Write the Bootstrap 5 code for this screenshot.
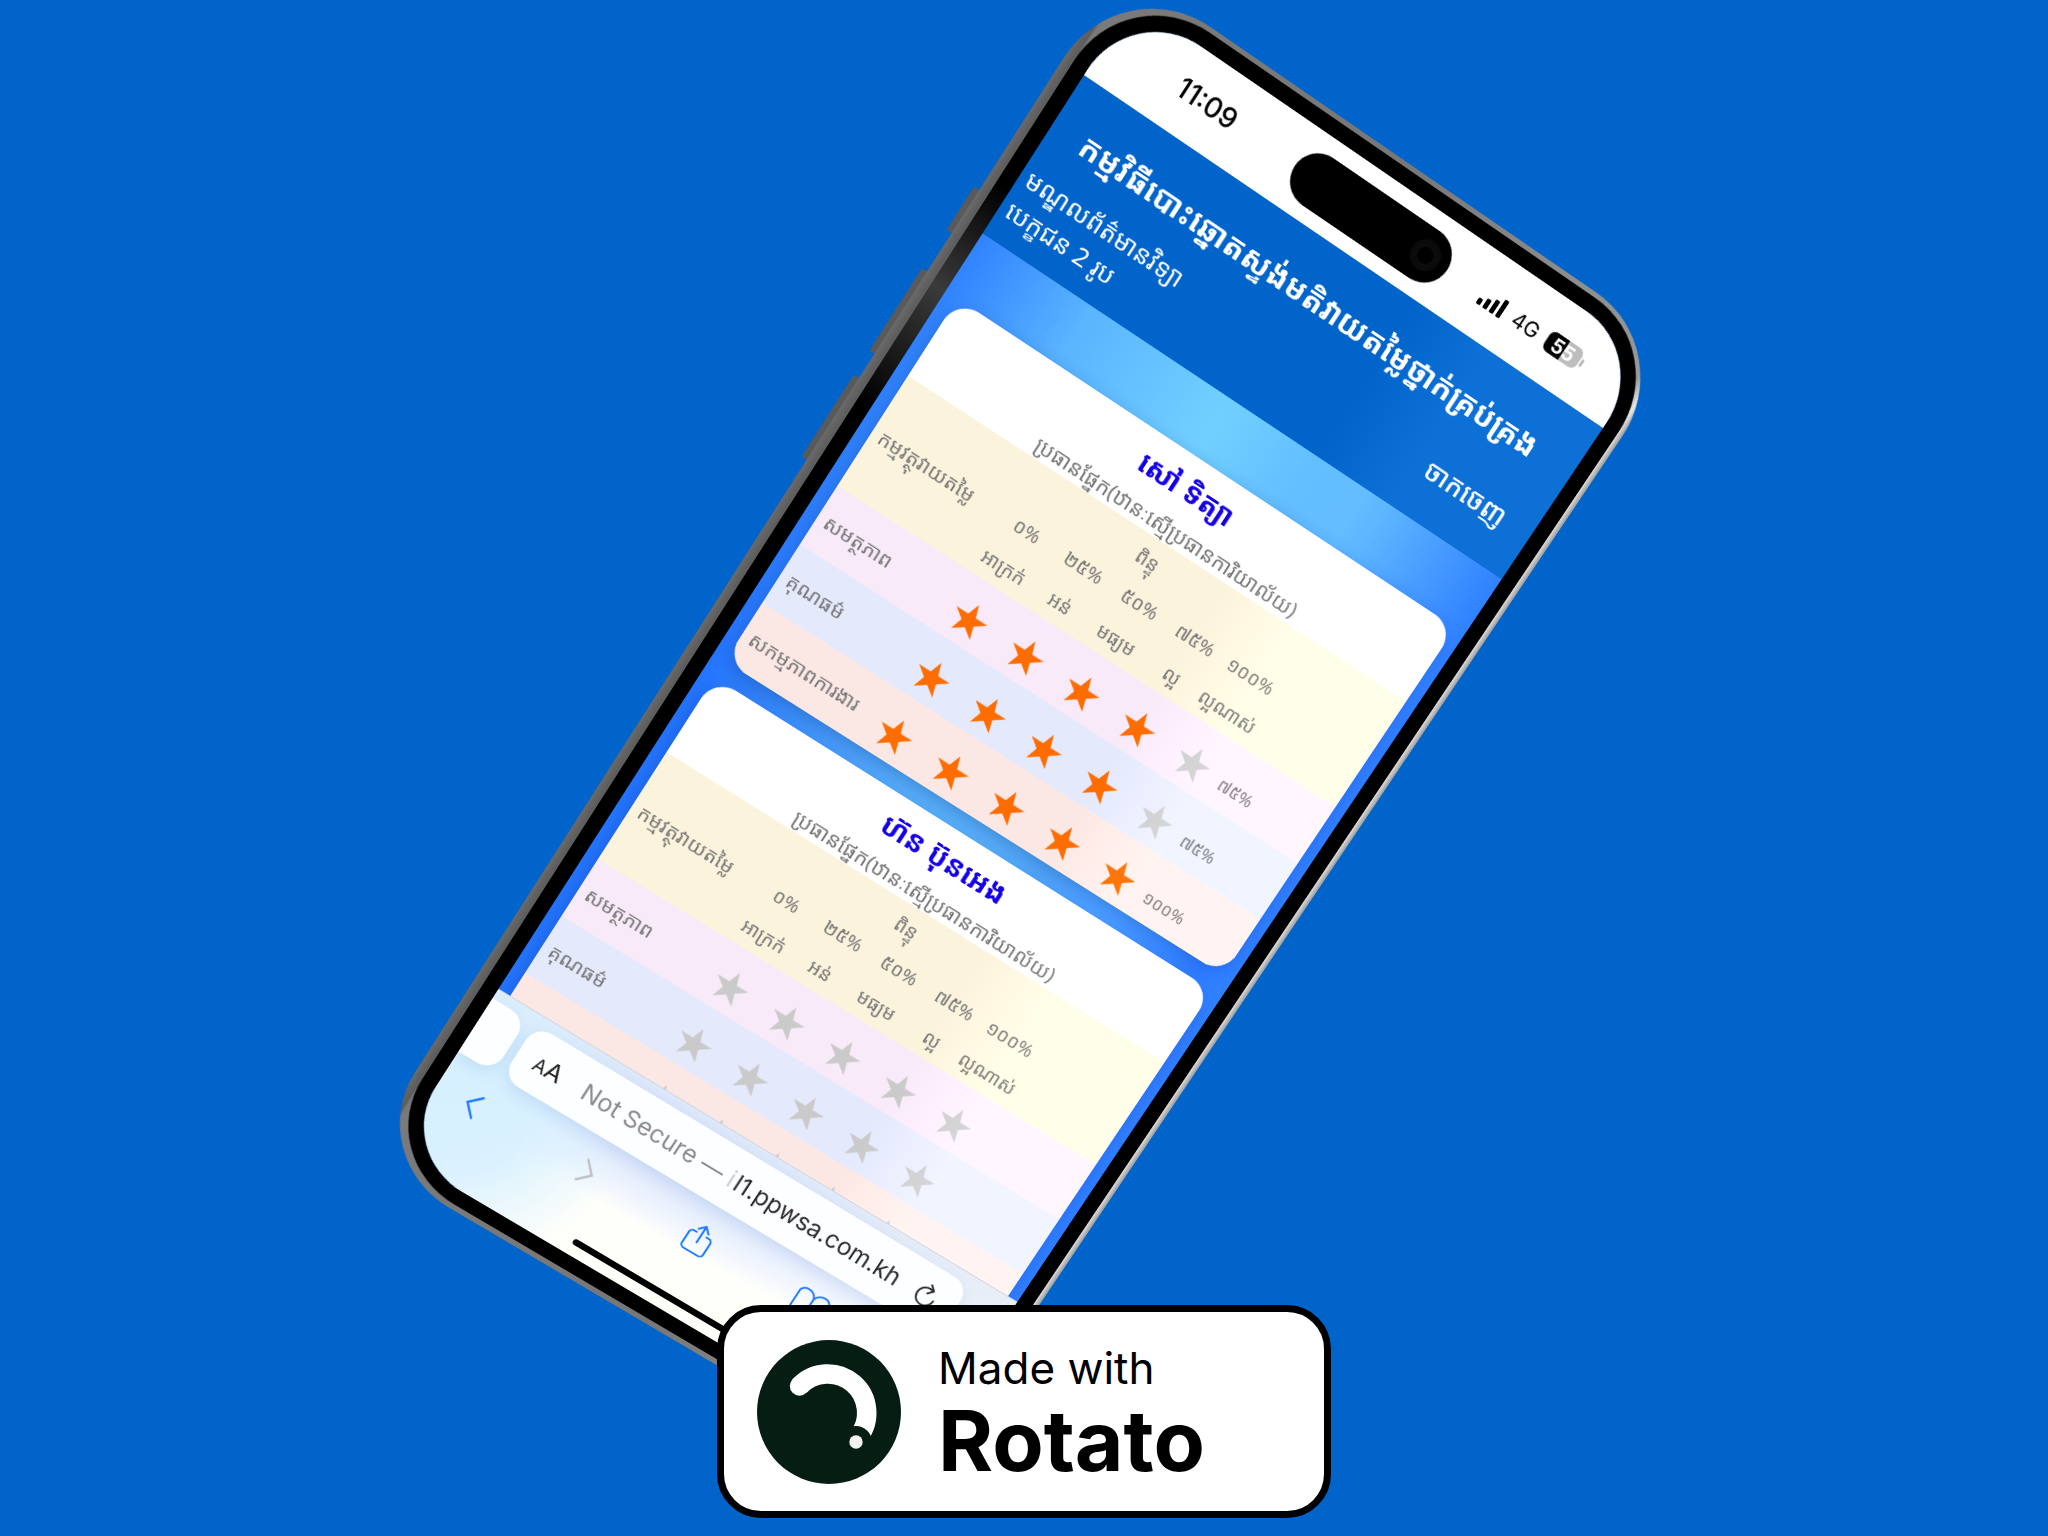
<!DOCTYPE html>
<html lang="km">
<head>
<meta charset="utf-8">
<meta name="viewport" content="width=device-width, initial-scale=1">
<title>កម្មវិធីបោះឆ្នោត</title>
<link href="https://cdn.jsdelivr.net/npm/bootstrap@5.3.0/dist/css/bootstrap.min.css" rel="stylesheet">
<style>
:root{--khmer:"Noto Sans Khmer","Khmer OS",Inter,"Noto Sans",sans-serif;--ui:Inter,"Liberation Sans",sans-serif}
body{background:#0064cb;font-family:var(--khmer);color:#777}
.stage{overflow:hidden;padding-bottom:18px}
/* phone, tilted in perspective */
.device{position:absolute;left:calc(50% - 1024px);top:0;width:640px;transform-origin:0 0;
 transform:matrix3d(.895099,.575017,0,.000051016,-.51416,.861673,0,.0000334845,0,0,1,0,1132.44,-.606,0,1)}
.frame{position:absolute;inset:-21px -22px -22px -26px;border-radius:106px;background:linear-gradient(90deg,#6a6a6a 0,#5c5c5c 9px,#7a7a7a 12px,#777 50%,#999 97%,#e8e8e8 99%,#999 100%)}
.glassring{position:absolute;inset:-16px;border-radius:98px;background:linear-gradient(90deg,transparent 16px,#000 24px),linear-gradient(180deg,#000 0 240px,#3a3a3a 360px,#000 500px)}
.sidekey{position:absolute;left:-32px;width:8px;background:#5a5a5a;border-radius:2px}
.key-a{top:240px;height:51px}.key-b{top:336px;height:98px}.key-c{top:463px;height:98px}
.screen{position:relative;height:1400px;border-radius:82px;overflow:hidden;background:radial-gradient(ellipse 340px 1000px at 47% 310px,#72d0ff,#5ab4ff 50%,#2475ff)}
.statusbar{height:88px;background:#fff;color:#000;font-family:var(--ui)}
.clock{width:226px;padding:23px 0 0 11px;font-size:28px;font-weight:500;line-height:40px}
.island{width:188px;height:56px;margin-top:17px;border-radius:28px;background:#000;padding-right:11px}
.lens{width:32px;height:32px;border-radius:50%;background:radial-gradient(circle,#000 35%,#0c0c0c 40%,#0a0a0a 70%,#000)}
.netstat{margin-left:42px;height:92px;gap:10px;font-size:22px}
.apphead{height:186px;background:#0064cb;color:#fff;padding:34px 6px 0 8px}
.apphead h1{font-size:32px;line-height:44px;font-weight:700;white-space:nowrap;margin:0 0 18px;padding-right:14px}
.apphead p{font-size:26px;line-height:36px}
.logout{font-size:28px;line-height:36px;font-weight:500;padding:18px 27px 0 0}
.cards{padding:68px 12px 0 14px;gap:20px}
.votecard{border-radius:26px;overflow:hidden;background:#fff;box-shadow:0 6px 18px rgba(0,40,120,.3)}
.cardtop{height:92px;padding:13px 4px 0 0}
.cardtop h2{font-size:30px;line-height:40px;font-weight:700;color:#1400e6;padding-right:10px}
.cardtop p{font-size:22px;line-height:30px;padding-top:8px}
.scores{width:100%;table-layout:fixed;border-collapse:collapse;font-size:20px;line-height:28px}
.scores th,.scores td{font-weight:400;padding:0;text-align:center;white-space:nowrap}
.scores th.crit{text-align:left;padding-left:9px;font-size:21px}
.scores thead{background:#fcf3dd}
.scores thead tr{height:44px}
.scores thead .points{padding:4px 36px 0 0}
.scores tbody tr{height:71px}
.r-skill{background:#f8eaf8}.r-moral{background:#e5e9fc}.r-work{background:#fbe8e5}
.scores td.total{text-align:left;font-size:18px;padding-top:16px}
.star{display:block;width:38px;height:38px;margin:14px auto 0;padding:0;border:0;background:#cacaca;
 clip-path:polygon(50% 2%,62% 37%,99% 37%,69% 59%,80% 95%,50% 73%,20% 95%,31% 59%,1% 37%,38% 37%)}
.star.on{background:#ff6c00}
.glare{position:absolute;inset:88px 0 0 0;background:linear-gradient(90deg,#000 405px,#0c0c0c 495px);mix-blend-mode:plus-lighter;pointer-events:none}
.browserbar{position:absolute;left:0;right:0;bottom:0;height:206px;font-family:var(--ui);border-top:1px solid #cfd6e2;padding-top:11px;
 background:radial-gradient(ellipse 210px 180px at 0 120px,#d6f0ff,rgba(214,240,255,.9) 50%,rgba(216,241,255,0)),radial-gradient(ellipse 460px 90px at 35% 50px,#cfdffb,rgba(211,225,251,0)),linear-gradient(#e8eef7,#fbfcff 50%,#fffffa 70%)}
.pill{height:67px;border-radius:20px;background:#fdfeff;box-shadow:0 6px 16px rgba(70,110,200,.14)}
.pill-prev{width:42px;border-radius:0 20px 20px 0}
.pill-url{width:536px;margin-left:10px;border:0;padding:0 20px;font-size:26px;color:#8a8a90}
.pill-url b{font-weight:400;color:#2b2b2e}
.cutoff{color:#cfcfd3;margin-right:2px}
.aa{width:58px;color:#222}.aa small{font-size:20px}
.tools{padding:19px 31px 0 25px}
.tools button{width:36px;height:44px;padding:0;border:0;background:none}
.homebar{position:absolute;left:207px;bottom:12px;width:226px;height:7px;border-radius:4px;background:#000}
/* maker badge */
.maker{position:relative;width:614px;height:213px;border:7px solid #000;border-radius:44px;background:#fff;color:#000;padding-left:33px;gap:37px;font-family:Inter,sans-serif}
.maker:hover{color:#000}
.maker .l1{font-size:44px;line-height:54px;padding-top:4px}
.maker .l2{font-size:84px;line-height:92px;font-weight:700}
</style>
<script src="https://cdn.jsdelivr.net/npm/bootstrap@5.3.0/dist/js/bootstrap.bundle.min.js"></script>
</head>
<body>
<main class="stage position-relative min-vh-100 d-flex flex-column justify-content-end align-items-center">
<div class="device">
 <div class="sidekey key-a"></div><div class="sidekey key-b"></div><div class="sidekey key-c"></div>
 <div class="frame"></div><div class="glassring"></div>
 <div class="screen">
  <div class="statusbar d-flex align-items-start">
   <div class="clock text-center flex-shrink-0">11:09</div>
   <div class="island d-flex align-items-center justify-content-end flex-shrink-0"><span class="lens"></span></div>
   <div class="netstat d-flex align-items-center">
    <svg width="32" height="22" viewBox="0 0 32 22"><g fill="#000"><rect x="1" y="14" width="5" height="7" rx="1.5"/><rect x="9" y="10" width="5" height="11" rx="1.5"/><rect x="17" y="6" width="5" height="15" rx="1.5"/><rect x="25" y="1" width="5" height="20" rx="1.5"/></g></svg>
    <span>4G</span>
    <svg width="46" height="26" viewBox="0 0 42 24"><defs><clipPath id="bc"><rect x="0" y="1" width="38" height="21" rx="6.500"/></clipPath></defs><g clip-path="url(#bc)"><rect width="42" height="24" fill="#bdbdbd"/><rect width="20" height="24" fill="#000"/></g><path d="M39.500 8a4 4 0 0 1 0 8z" fill="#bdbdbd"/><text x="19" y="18.500" text-anchor="middle" font-family="Inter,sans-serif" font-size="19" font-weight="700" fill="#fff">55</text></svg>
   </div>
  </div>
  <header class="apphead">
   <h1 class="text-center">កម្មវិធីបោះឆ្នោតស្ទង់មតិវាយតម្លៃថ្នាក់គ្រប់គ្រង</h1>
   <div class="d-flex justify-content-between">
    <div><p class="m-0">មណ្ឌលព័ត៌មានវិទ្យា</p><p class="m-0">បេក្ខជន 2 រូប</p></div>
    <a class="logout text-white text-decoration-none" href="#">ចាកចេញ</a>
   </div>
  </header>
  <div class="cards d-flex flex-column">
   <section class="votecard">
    <div class="cardtop text-center"><h2 class="m-0">សៅ ទិត្យា</h2><p class="m-0">ប្រធានផ្នែក(ឋានៈស្មើប្រធានការិយាល័យ)</p></div>
    <table class="scores">
     <colgroup><col style="width:152px"><col style="width:69px"><col style="width:69px"><col style="width:69px"><col style="width:69px"><col style="width:69px"><col></colgroup>
     <thead>
      <tr><th class="crit" rowspan="3">កម្មវត្ថុវាយតម្លៃ</th><th class="points" colspan="5">ពិន្ទុ</th><th rowspan="3"></th></tr>
      <tr><th>០%</th><th>២៥%</th><th>៥០%</th><th>៧៥%</th><th>១០០%</th></tr>
      <tr><th>អាក្រក់</th><th>អន់</th><th>មធ្យម</th><th>ល្អ</th><th>ល្អណាស់</th></tr>
     </thead>
     <tbody>
      <tr class="r-skill"><th class="crit">សមត្ថភាព</th><td><button class="star on" aria-label="០%"></button></td><td><button class="star on" aria-label="២៥%"></button></td><td><button class="star on" aria-label="៥០%"></button></td><td><button class="star on" aria-label="៧៥%"></button></td><td><button class="star" aria-label="១០០%"></button></td><td class="total">៧៥%</td></tr>
      <tr class="r-moral"><th class="crit">គុណធម៌</th><td><button class="star on" aria-label="០%"></button></td><td><button class="star on" aria-label="២៥%"></button></td><td><button class="star on" aria-label="៥០%"></button></td><td><button class="star on" aria-label="៧៥%"></button></td><td><button class="star" aria-label="១០០%"></button></td><td class="total">៧៥%</td></tr>
      <tr class="r-work"><th class="crit">សកម្មភាពការងារ</th><td><button class="star on" aria-label="០%"></button></td><td><button class="star on" aria-label="២៥%"></button></td><td><button class="star on" aria-label="៥០%"></button></td><td><button class="star on" aria-label="៧៥%"></button></td><td><button class="star on" aria-label="១០០%"></button></td><td class="total">១០០%</td></tr>
     </tbody>
    </table>
   </section>
   <section class="votecard">
    <div class="cardtop text-center"><h2 class="m-0">ហ៊ន ប៊ុនអេង</h2><p class="m-0">ប្រធានផ្នែក(ឋានៈស្មើប្រធានការិយាល័យ)</p></div>
    <table class="scores">
     <colgroup><col style="width:152px"><col style="width:69px"><col style="width:69px"><col style="width:69px"><col style="width:69px"><col style="width:69px"><col></colgroup>
     <thead>
      <tr><th class="crit" rowspan="3">កម្មវត្ថុវាយតម្លៃ</th><th class="points" colspan="5">ពិន្ទុ</th><th rowspan="3"></th></tr>
      <tr><th>០%</th><th>២៥%</th><th>៥០%</th><th>៧៥%</th><th>១០០%</th></tr>
      <tr><th>អាក្រក់</th><th>អន់</th><th>មធ្យម</th><th>ល្អ</th><th>ល្អណាស់</th></tr>
     </thead>
     <tbody>
      <tr class="r-skill"><th class="crit">សមត្ថភាព</th><td><button class="star" aria-label="០%"></button></td><td><button class="star" aria-label="២៥%"></button></td><td><button class="star" aria-label="៥០%"></button></td><td><button class="star" aria-label="៧៥%"></button></td><td><button class="star" aria-label="១០០%"></button></td><td></td></tr>
      <tr class="r-moral"><th class="crit">គុណធម៌</th><td><button class="star" aria-label="០%"></button></td><td><button class="star" aria-label="២៥%"></button></td><td><button class="star" aria-label="៥០%"></button></td><td><button class="star" aria-label="៧៥%"></button></td><td><button class="star" aria-label="១០០%"></button></td><td></td></tr>
      <tr class="r-work"><th class="crit"></th><td><button class="star" aria-label="០%"></button></td><td><button class="star" aria-label="២៥%"></button></td><td><button class="star" aria-label="៥០%"></button></td><td><button class="star" aria-label="៧៥%"></button></td><td><button class="star" aria-label="១០០%"></button></td><td></td></tr>
     </tbody>
    </table>
   </section>
  </div>
  <div class="glare"></div>
  <div class="browserbar">
   <div class="d-flex">
    <div class="pill pill-prev"></div>
    <button class="pill pill-url d-flex align-items-center">
     <span class="aa d-flex align-items-baseline"><small>A</small>A</span>
     <span class="flex-grow-1 text-start text-nowrap">Not Secure — <span class="cutoff">i</span><b>l1.ppwsa.com.kh</b></span>
     <svg width="28" height="30" viewBox="0 0 28 30" fill="none" stroke="#2b2b2e" stroke-width="2" stroke-linecap="round" stroke-linejoin="round"><path d="M23.500 16a10 10 0 1 1-6-9.200M13 1.500l5.500 5-5 5.500"/></svg>
    </button>
   </div>
   <div class="tools d-flex justify-content-between">
    <button aria-label="Back"><svg width="36" height="40" viewBox="0 0 36 40" fill="none" stroke="#1f7bff" stroke-width="2.500" stroke-linecap="round"><path d="M23 8L11 20l12 13"/></svg></button>
    <button aria-label="Forward"><svg width="36" height="40" viewBox="0 0 36 40" fill="none" stroke="#bfbfc4" stroke-width="2.500" stroke-linecap="round"><path d="M12 7l12 13-12 12"/></svg></button>
    <button aria-label="Share"><svg width="36" height="40" viewBox="0 0 36 40" fill="none" stroke="#1f7bff" stroke-width="2.200" stroke-linecap="round" stroke-linejoin="round"><path d="M12 14H9a4 4 0 0 0-4 4v14a4 4 0 0 0 4 4h18a4 4 0 0 0 4-4V18a4 4 0 0 0-4-4h-3M18 24V4M12 10l6-6 6 6"/></svg></button>
    <button aria-label="Bookmarks"><svg width="40" height="40" viewBox="0 0 40 40" fill="none" stroke="#1f7bff" stroke-width="2.200" stroke-linejoin="round"><path d="M19 12C17 7 13 5 9 5S2 7 1 10v22c3-3 14-4 18 1 4-5 15-4 18-1V10c-1-3-4-5-8-5s-8 2-10 7v21"/></svg></button>
    <button aria-label="Tabs"><svg width="36" height="40" viewBox="0 0 36 40" fill="none" stroke="#1f7bff" stroke-width="2.200"><rect x="3" y="12" width="22" height="22" rx="4"/><path d="M10 12V9a4 4 0 0 1 4-4h15a4 4 0 0 1 4 4v15a4 4 0 0 1-4 4h-4"/></svg></button>
   </div>
   <div class="homebar"></div>
  </div>
 </div>
</div>
<a class="maker d-flex align-items-center text-decoration-none" href="#">
 <svg width="144" height="144" viewBox="0 0 144 144"><circle cx="72" cy="72" r="72" fill="#061d14"/><path d="M42.500 46A39 39 0 0 1 101.400 97" fill="none" stroke="#fff" stroke-width="19.500"/><circle cx="42.500" cy="46" r="9.700" fill="#fff"/><circle cx="99" cy="102" r="16" fill="#061d14"/><circle cx="99" cy="102" r="6.700" fill="#f4f2f0"/></svg>
 <span class="d-flex flex-column"><span class="l1">Made with</span><span class="l2">Rotato</span></span>
</a>
</main>
</body>
</html>
